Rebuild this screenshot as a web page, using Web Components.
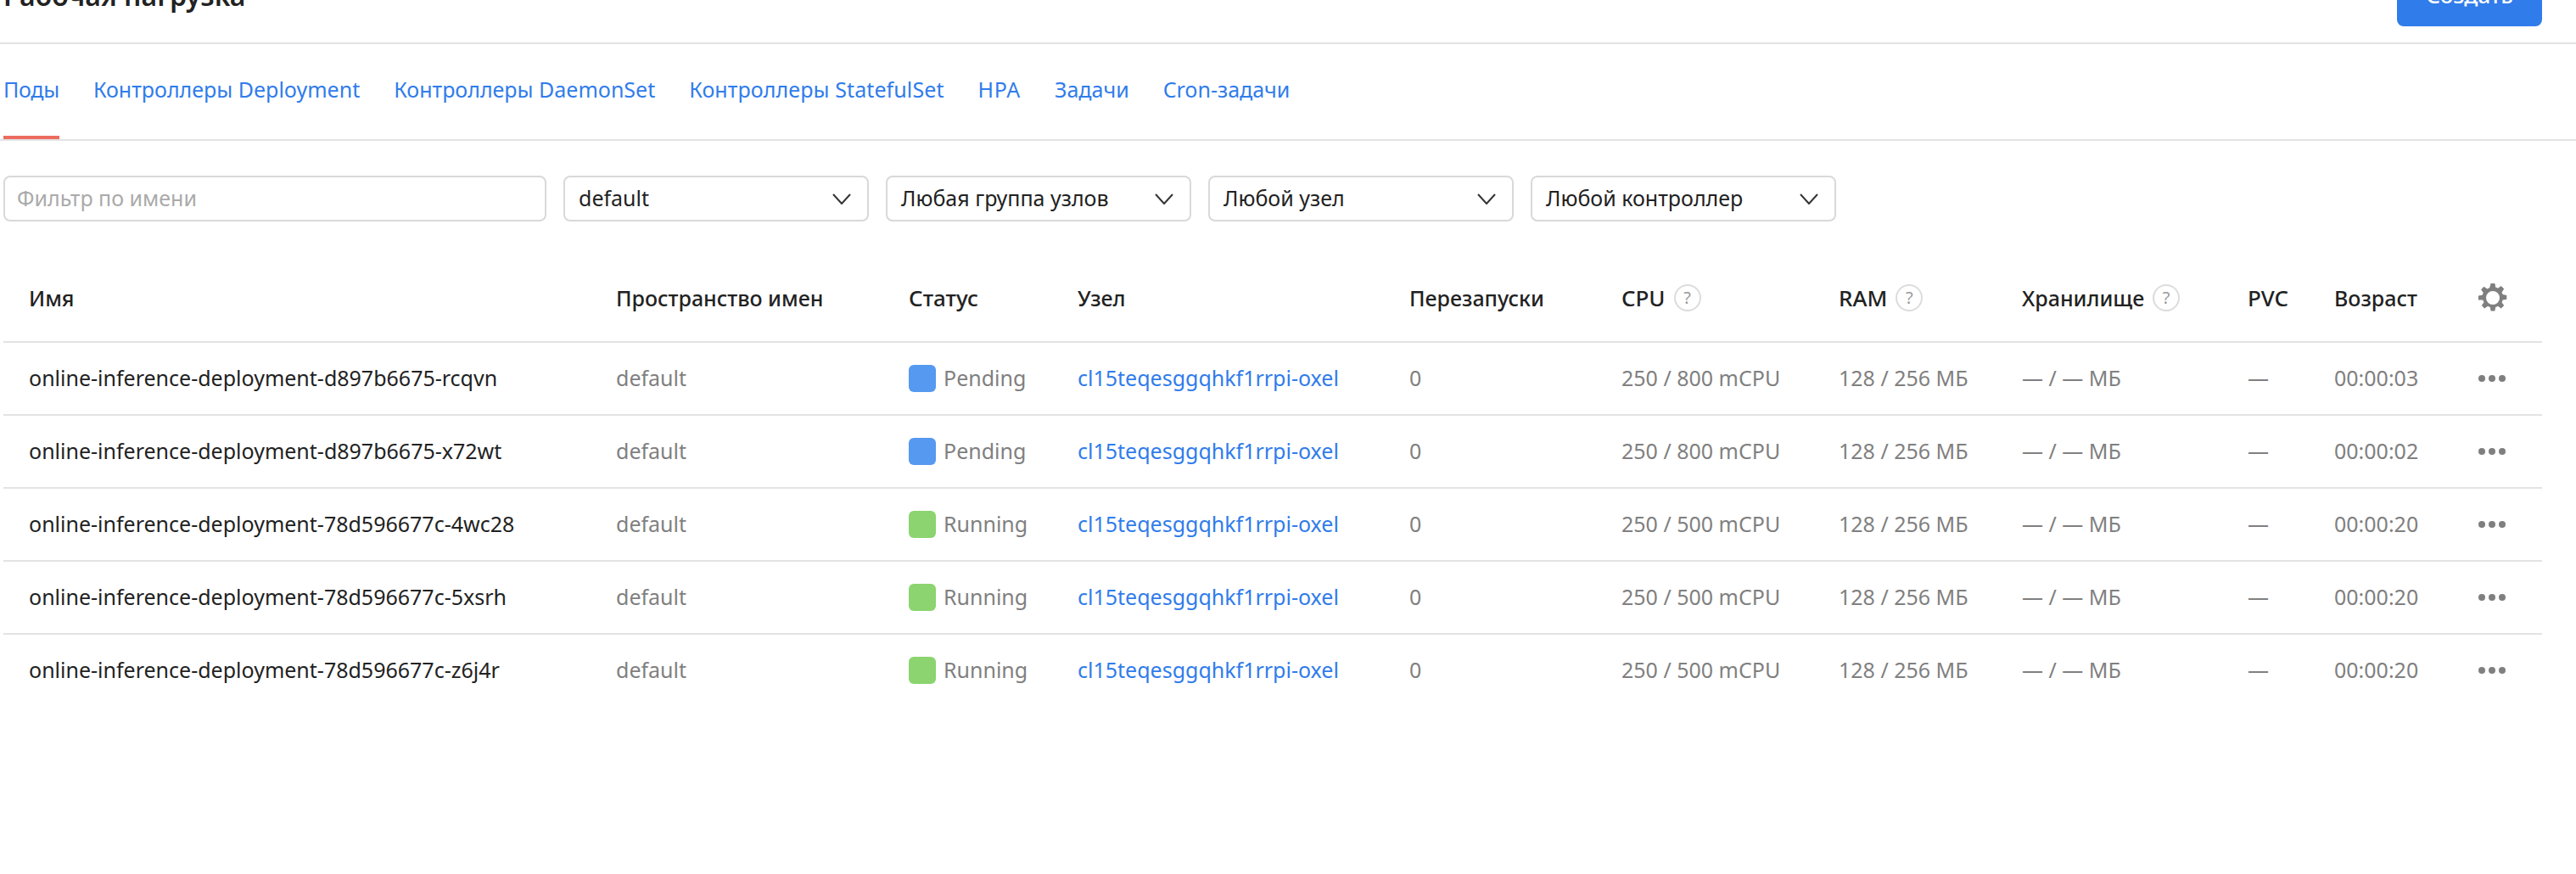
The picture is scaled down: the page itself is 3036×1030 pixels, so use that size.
<!doctype html>
<html lang="ru"><head><meta charset="utf-8"><title>Рабочая нагрузка</title>
<style>
html,body{margin:0;background:#fff;overflow:hidden;height:100%}
body{font:25px/34px "Noto Sans","Noto Sans CJK SC",sans-serif;color:#222}
</style></head><body>
<workload-page></workload-page>
<template id="t-page"><style>
:host{display:block;width:2992px;padding-left:4px;margin-top:-41px}
.top{display:flex;justify-content:space-between;align-items:flex-start;height:91px;margin:0 -40px 0 -4px;padding:0 40px 0 4px;border-bottom:2px solid #e3e3e3}
h1{margin:0;font-size:32px;line-height:72px;font-weight:600;color:#222}
.filters{display:flex;gap:20px;padding:41px 0 54px}
</style>
<div class="top"><h1>Рабочая нагрузка</h1><primary-button>Создать</primary-button></div>
<tab-bar></tab-bar>
<div class="filters"><filter-input>Фильтр по имени</filter-input><filter-select>default</filter-select><filter-select>Любая группа узлов</filter-select><filter-select>Любой узел</filter-select><filter-select>Любой контроллер</filter-select></div>
<pods-table></pods-table>
</template>
<template id="t-btn"><style>
:host{display:flex;align-items:center;justify-content:center;box-sizing:border-box;width:171px;height:72px;padding-bottom:2px;background:#307ceb;border-radius:8px;color:#fff;font-size:26px;font-weight:500}
</style><slot></slot></template>
<template id="t-input"><style>
:host{display:flex;align-items:center;box-sizing:border-box;width:640px;height:54px;border:2px solid #d9d9d9;border-radius:8px;padding:0 14px 2px;color:#aaa}
</style><slot></slot></template>
<template id="t-select"><style>
:host{display:flex;align-items:center;justify-content:space-between;box-sizing:border-box;width:360px;height:54px;border:2px solid #d9d9d9;border-radius:8px;padding:0 16px 2px;color:#222}
svg{display:block;margin:3px 3px 0 0}
</style><slot></slot><svg width="22" height="13" viewBox="0 0 22 13" fill="none" stroke="#333" stroke-width="2"><path d="M1 1l10 11L21 1"/></svg></template>
<template id="t-tabs"><style>
:host{display:flex;gap:40px;height:112px;margin:0 -40px 0 -4px;padding:0 40px 0 4px;border-bottom:2px solid #e3e3e3;color:#307ceb}
a{display:flex;align-items:center;height:112px;padding-bottom:6px;box-sizing:border-box;color:inherit;text-decoration:none;position:relative}
a.on::after{content:"";position:absolute;left:0;right:0;bottom:0;height:4px;background:#ee6b60}
</style><a class="on" style="letter-spacing:-.3px">Поды</a><a>Контроллеры Deployment</a><a>Контроллеры DaemonSet</a><a style="letter-spacing:.1px">Контроллеры StatefulSet</a><a style="letter-spacing:.7px">HPA</a><a>Задачи</a><a>Cron-задачи</a></template>
<template id="t-table"><style>
:host{display:block;width:2992px}
.row{display:grid;grid-template-columns:692px 345px 199px 391px 250px 256px 216px 266px 102px 170px 105px;align-items:center;height:84px;border-bottom:2px solid #e3e3e3}
.row.head{height:87px;font-weight:500;color:#222}
.row:last-child{border-bottom:0}
.row>*{padding-left:30px;padding-bottom:3px;white-space:nowrap;display:flex;align-items:center}
.row.head>*{padding-bottom:16px}
.row.head>.w{font-size:26px}
.m{color:#808080}
.link{color:#307ceb}
.q{display:inline-flex;align-items:center;justify-content:center;box-sizing:border-box;width:32px;height:32px;margin-left:10px;border:2px solid #dcdcdc;border-radius:50%;color:#999;font-size:20px;font-weight:400;line-height:1}
.sq{width:32px;height:32px;border-radius:6px;margin:3px 9px 0 0;flex:none}
.p{background:#5599f0}.r{background:#8bd46f}
svg{display:block}
.dots{padding-top:3px}
</style><div id="body"></div></template>
<script>
function mount(el,id){const s=el.attachShadow({mode:'open'});s.appendChild(document.getElementById(id).content.cloneNode(true));return s}
const def=(n,id)=>customElements.define(n,class extends HTMLElement{constructor(){super();mount(this,id)}});
def('workload-page','t-page');def('primary-button','t-btn');def('filter-input','t-input');def('filter-select','t-select');def('tab-bar','t-tabs');
const GEAR='<svg width="34" height="34" viewBox="0 0 34 34" fill="#7f7f7f"><path fill-rule="evenodd" d="M14.6 0h4.8l.8 4.6c1 .3 1.9.7 2.7 1.2l3.9-2.7 3.4 3.4-2.7 3.9c.5.8.9 1.7 1.2 2.7l4.6.8v4.8l-4.6.8c-.3 1-.7 1.9-1.2 2.7l2.7 3.9-3.4 3.4-3.9-2.7c-.8.5-1.7.9-2.7 1.2l-.8 4.6h-4.8l-.8-4.6c-1-.3-1.9-.7-2.7-1.2l-3.9 2.7-3.4-3.4 2.7-3.9c-.5-.8-.9-1.7-1.2-2.7L0 19.4v-4.8l4.6-.8c.3-1 .7-1.9 1.2-2.7L3.1 7.2l3.4-3.4 3.9 2.7c.8-.5 1.7-.9 2.7-1.2zM17 9a8 8 0 1 0 0 16 8 8 0 0 0 0-16z"/></svg>';
const DOTS='<svg width="32" height="8" viewBox="0 0 32 8" fill="#7f7f7f"><circle cx="4" cy="4" r="4"/><circle cx="16" cy="4" r="4"/><circle cx="28" cy="4" r="4"/></svg>';
const Q='<span class="q">?</span>';
const rows=[['online-inference-deployment-d897b6675-rcqvn','p','Pending','800','00:00:03'],['online-inference-deployment-d897b6675-x72wt','p','Pending','800','00:00:02'],['online-inference-deployment-78d596677c-4wc28','r','Running','500','00:00:20'],['online-inference-deployment-78d596677c-5xsrh','r','Running','500','00:00:20'],['online-inference-deployment-78d596677c-z6j4r','r','Running','500','00:00:20']];
customElements.define('pods-table',class extends HTMLElement{constructor(){super();const s=mount(this,'t-table');
let h=`<div class="row head"><div>Имя</div><div>Пространство имен</div><div class="w">Статус</div><div>Узел</div><div>Перезапуски</div><div class="w">CPU${Q}</div><div class="w">RAM${Q}</div><div>Хранилище${Q}</div><div class="w">PVC</div><div>Возраст</div><div>${GEAR}</div></div>`;
for(const r of rows)h+=`<div class="row"><div>${r[0]}</div><div class="m">default</div><div class="m"><span class="sq ${r[1]}"></span>${r[2]}</div><div class="link">cl15teqesggqhkf1rrpi-oxel</div><div class="m">0</div><div class="m">250 / ${r[3]} mCPU</div><div class="m">128 / 256 МБ</div><div class="m">— / — МБ</div><div class="m">—</div><div class="m">${r[4]}</div><div class="dots">${DOTS}</div></div>`;
s.getElementById('body').innerHTML=h}});
</script>
</body></html>
